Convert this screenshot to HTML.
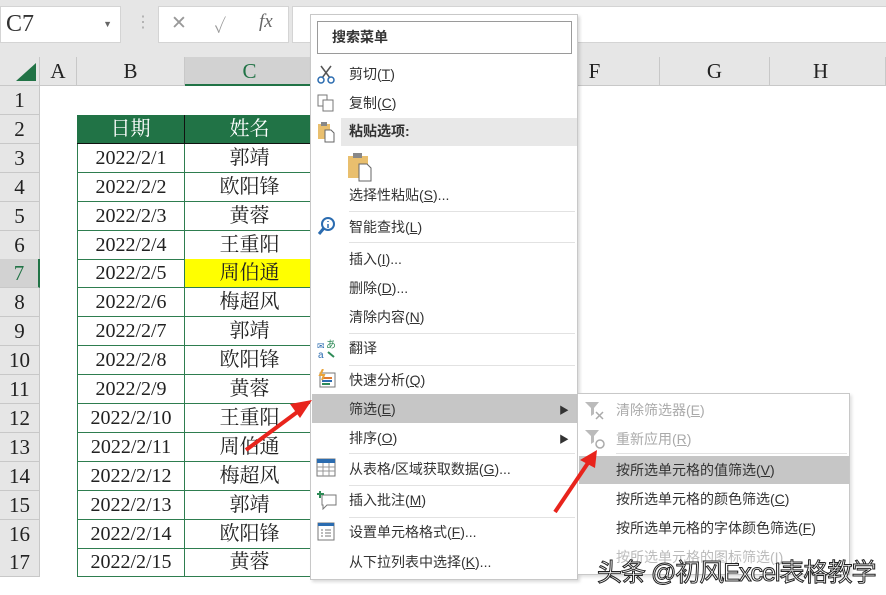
<!DOCTYPE html>
<html><head><meta charset="utf-8"><style>
*{margin:0;padding:0;box-sizing:border-box}
body{width:886px;height:595px;overflow:hidden;background:#fff;position:relative;font-family:"Liberation Serif","Noto Serif CJK SC",serif}
.a{position:absolute}
.hdr{background:#e6e6e6;color:#222;font-size:21px;text-align:center;border-right:1px solid #c8c8c8;border-bottom:1px solid #c8c8c8}
.rh{position:absolute;left:0;width:40px;background:#e6e6e6;border-bottom:1px solid #c8c8c8;border-right:1px solid #c8c8c8;font-size:21px;text-align:center;color:#222}
.cell{position:absolute;font-size:20px;text-align:center;color:#222;border-bottom:1px solid #2e7d4f;border-right:1px solid #2e7d4f;font-family:"Liberation Serif","Noto Serif CJK SC",serif}
.m{font-family:"Liberation Sans","Noto Sans CJK SC",sans-serif;font-size:14px;color:#333}
.it{position:absolute;left:38px;height:28px;line-height:28px}
.sep{position:absolute;left:38px;right:2px;height:1px;background:#e2e2e2}
</style></head><body>
<div class="a" style="left:0;top:0;width:886px;height:57px;background:#e6e6e6"></div>
<div class="a" style="left:0;top:6px;width:121px;height:37px;background:#fff;border:1px solid #d4d4d4;font-size:24px;padding:4px 0 0 5px;color:#333">C7<span style="position:absolute;right:8px;top:12px;font-size:9px;color:#666">▼</span></div>
<div class="a" style="left:135px;top:12px;color:#aaa;font-size:16px">⋮</div>
<div class="a" style="left:158px;top:6px;width:131px;height:37px;background:#fff;border:1px solid #d4d4d4;color:#999;font-size:19px">
<span class="a" style="left:12px;top:5px">✕</span><span class="a" style="left:55px;top:5px">✓</span><span class="a" style="left:100px;top:4px;font-style:italic;color:#666">fx</span></div>
<div class="a" style="left:292px;top:6px;width:600px;height:37px;background:#fff;border:1px solid #d4d4d4"></div>
<div class="a hdr" style="left:0;top:57px;width:40px;height:29px"></div>
<svg class="a" style="left:14px;top:61px" width="24" height="22"><polygon points="22,2 22,20 2,20" fill="#217346"/></svg>
<div class="a hdr" style="left:40px;top:57px;width:37px;height:29px;line-height:29px">A</div>
<div class="a hdr" style="left:77px;top:57px;width:108px;height:29px;line-height:29px">B</div>
<div class="a hdr" style="left:185px;top:57px;width:130px;height:29px;line-height:29px;background:#d2d2d2;color:#217346;border-bottom:2px solid #217346">C</div>
<div class="a hdr" style="left:530px;top:57px;width:130px;height:29px;line-height:29px">F</div>
<div class="a hdr" style="left:660px;top:57px;width:110px;height:29px;line-height:29px">G</div>
<div class="a hdr" style="left:770px;top:57px;width:116px;height:29px;line-height:29px;text-align:left;padding-left:43px">H</div>
<div id="rows"></div>
<script>
var names=["郭靖","欧阳锋","黄蓉","王重阳","周伯通","梅超风","郭靖","欧阳锋","黄蓉","王重阳","周伯通","梅超风","郭靖","欧阳锋","黄蓉"];
var h='';
for(var i=1;i<=17;i++){
 var t=86+(i-1)*28.9;
 h+='<div class="rh" style="top:'+t+'px;height:29px;line-height:29px;'+(i==7?'background:#d2d2d2;color:#217346;border-right:2px solid #217346':'')+'">'+i+'</div>';
 if(i==2){
  h+='<div class="cell" style="left:77px;top:'+t+'px;width:108px;height:29px;line-height:29px;background:#217346;color:#fff;border-color:#111">日期</div>';
  h+='<div class="cell" style="left:185px;top:'+t+'px;width:130px;height:29px;line-height:29px;background:#217346;color:#fff;border-color:#111">姓名</div>';
 }else if(i>2){
  h+='<div class="cell" style="left:77px;top:'+t+'px;width:108px;height:29px;line-height:29px;border-left:1px solid #2e7d4f">2022/2/'+(i-2)+'</div>';
  h+='<div class="cell" style="left:185px;top:'+t+'px;width:130px;height:29px;line-height:29px;'+(i==7?'background:#ffff00':'')+'">'+names[i-3]+'</div>';
 }
}
document.getElementById('rows').innerHTML=h;
</script>
<div class="a m" style="left:310px;top:14px;width:268px;height:566px;background:#fff;border:1px solid #c8c8c8;box-shadow:2px 2px 3px rgba(0,0,0,.15)">
<div class="a" style="left:6px;top:6px;width:255px;height:33px;border:1px solid #9a9a9a;font-weight:bold;line-height:31px;padding-left:14px;font-size:14px">搜索菜单</div>
<div class="it" style="top:45px">剪切(<u>T</u>)</div>
<div class="it" style="top:74px">复制(<u>C</u>)</div>
<div class="a" style="left:30px;top:103px;width:236px;height:28px;background:#e8e8e8"></div>
<div class="it" style="top:102px;font-weight:bold">粘贴选项:</div>
<svg class="a" style="left:36px;top:137px" width="26" height="30"><rect x="1" y="4" width="20" height="22" fill="#e9bf6e"/><rect x="6" y="1" width="9" height="5" fill="#888"/><path d="M12 12h8l4 4v13h-12z" fill="#fff" stroke="#666"/></svg>
<div class="it" style="top:166px">选择性粘贴(<u>S</u>)...</div>
<div class="sep" style="top:196px"></div>
<div class="it" style="top:198px">智能查找(<u>L</u>)</div>
<div class="sep" style="top:227px"></div>
<div class="it" style="top:230px">插入(<u>I</u>)...</div>
<div class="it" style="top:259px">删除(<u>D</u>)...</div>
<div class="it" style="top:288px">清除内容(<u>N</u>)</div>
<div class="sep" style="top:318px"></div>
<div class="it" style="top:319px">翻译</div>
<div class="sep" style="top:350px"></div>
<div class="it" style="top:351px">快速分析(<u>Q</u>)</div>
<div class="a" style="left:1px;top:379px;width:265px;height:29px;background:#c6c6c6"></div>
<div class="it" style="top:380px">筛选(<u>E</u>)</div><div class="a" style="left:248px;top:387px;font-size:10px">▶</div>
<div class="it" style="top:409px">排序(<u>O</u>)</div><div class="a" style="left:248px;top:416px;font-size:10px">▶</div>
<div class="sep" style="top:438px"></div>
<div class="it" style="top:440px">从表格/区域获取数据(<u>G</u>)...</div>
<div class="sep" style="top:470px"></div>
<div class="it" style="top:471px">插入批注(<u>M</u>)</div>
<div class="sep" style="top:502px"></div>
<div class="it" style="top:503px">设置单元格格式(<u>F</u>)...</div>
<div class="it" style="top:533px">从下拉列表中选择(<u>K</u>)...</div>
<svg class="a" style="left:6px;top:50px" width="18" height="20"><path d="M4 1l9 12M14 1l-9 12" stroke="#555" stroke-width="1.5"/><circle cx="4" cy="15" r="3" fill="none" stroke="#2b6cb0" stroke-width="1.5"/><circle cx="14" cy="15" r="3" fill="none" stroke="#2b6cb0" stroke-width="1.5"/></svg>
<svg class="a" style="left:6px;top:79px" width="18" height="18"><rect x="1" y="1" width="9" height="11" fill="#fff" stroke="#777"/><rect x="6" y="6" width="10" height="11" fill="#fff" stroke="#777"/></svg>
<svg class="a" style="left:6px;top:106px" width="18" height="22"><rect x="1" y="3" width="12" height="15" fill="#e9bf6e"/><rect x="4" y="1" width="6" height="4" fill="#888"/><path d="M8 9h6l3 3v9h-9z" fill="#fff" stroke="#666"/></svg>
<svg class="a" style="left:6px;top:202px" width="18" height="20"><circle cx="11" cy="7" r="6" fill="none" stroke="#2b6cb0" stroke-width="2"/><path d="M7 11l-5 6" stroke="#2b6cb0" stroke-width="3"/><path d="M11 4v1M11 7v4" stroke="#2b6cb0" stroke-width="1.5"/></svg>
<svg class="a" style="left:6px;top:324px" width="20" height="20"><text x="0" y="10" font-size="9" fill="#2b6cb0" font-family="Liberation Sans">✉</text><text x="9" y="9" font-size="10" fill="#2e8b57">あ</text><text x="1" y="19" font-size="10" fill="#2b6cb0" font-family="Liberation Sans">a</text><path d="M11 13l6 5" stroke="#2e8b57" stroke-width="2"/></svg>
<svg class="a" style="left:6px;top:354px" width="20" height="20"><rect x="3" y="4" width="15" height="14" fill="#fff" stroke="#777"/><path d="M5 9h10" stroke="#e07a30" stroke-width="2"/><path d="M5 12h10" stroke="#2b6cb0" stroke-width="2"/><path d="M5 15h8" stroke="#2e8b57" stroke-width="2"/><path d="M6 0l-3 6h4l-2 5" stroke="#e9a33a" stroke-width="2" fill="none"/></svg>
<svg class="a" style="left:5px;top:443px" width="20" height="20"><rect x="1" y="1" width="18" height="17" fill="#fff" stroke="#777"/><rect x="1" y="1" width="18" height="4" fill="#2b6cb0"/><path d="M1 9h18M1 13h18M7 5v13M13 5v13" stroke="#999"/></svg>
<svg class="a" style="left:5px;top:475px" width="22" height="20"><path d="M6 5h14v10h-9l-4 4v-4h-1z" fill="#fff" stroke="#777"/><path d="M4 1v7M1 4h7" stroke="#2e8b57" stroke-width="2"/></svg>
<svg class="a" style="left:6px;top:507px" width="18" height="20"><rect x="1" y="1" width="16" height="17" fill="#fff" stroke="#777"/><rect x="1" y="1" width="16" height="3" fill="#2b6cb0"/><path d="M4 8h2M8 8h6M4 11h2M8 11h6M4 14h2M8 14h6" stroke="#777"/></svg>
</div>
<div class="a m" style="left:577px;top:393px;width:273px;height:182px;background:#fff;border:1px solid #c8c8c8;box-shadow:2px 2px 3px rgba(0,0,0,.12)">
<div class="it" style="left:38px;top:2px;color:#aaa">清除筛选器(<u>E</u>)</div>
<div class="it" style="left:38px;top:31px;color:#aaa">重新应用(<u>R</u>)</div>
<div class="sep" style="top:59px"></div>
<div class="a" style="left:1px;top:62px;width:270px;height:28px;background:#c6c6c6"></div>
<div class="it" style="left:38px;top:62px">按所选单元格的值筛选(<u>V</u>)</div>
<div class="it" style="left:38px;top:91px">按所选单元格的颜色筛选(<u>C</u>)</div>
<div class="it" style="left:38px;top:120px">按所选单元格的字体颜色筛选(<u>F</u>)</div>
<div class="it" style="left:38px;top:149px;color:#bbb">按所选单元格的图标筛选(<u>I</u>)</div>
<svg class="a" style="left:6px;top:7px" width="22" height="20"><path d="M1 1h14l-5 6v6l-3 2v-8z" fill="#bbb"/><path d="M12 11l7 7M19 11l-7 7" stroke="#aaa" stroke-width="1.5"/></svg>
<svg class="a" style="left:6px;top:35px" width="22" height="20"><path d="M1 1h14l-5 6v6l-3 2v-8z" fill="#bbb"/><circle cx="16" cy="15" r="4" fill="none" stroke="#aaa" stroke-width="1.5"/></svg>
</div>
<svg class="a" style="left:0;top:0" width="886" height="595">
<path d="M246 450 L300 410" stroke="#e8241c" stroke-width="4"/><polygon points="312,400 290,404 300,418" fill="#e8241c"/>
<path d="M555 512 L590 460" stroke="#e8241c" stroke-width="4"/><polygon points="597,450 580,460 595,468" fill="#e8241c"/>
</svg>
<div class="a" style="left:597px;top:553px;font-family:'Liberation Sans','Noto Sans CJK SC',sans-serif;font-size:25px;color:#fff;-webkit-text-stroke:1px #222;letter-spacing:-1px">头条 @初风Excel表格教学</div>
</body></html>
